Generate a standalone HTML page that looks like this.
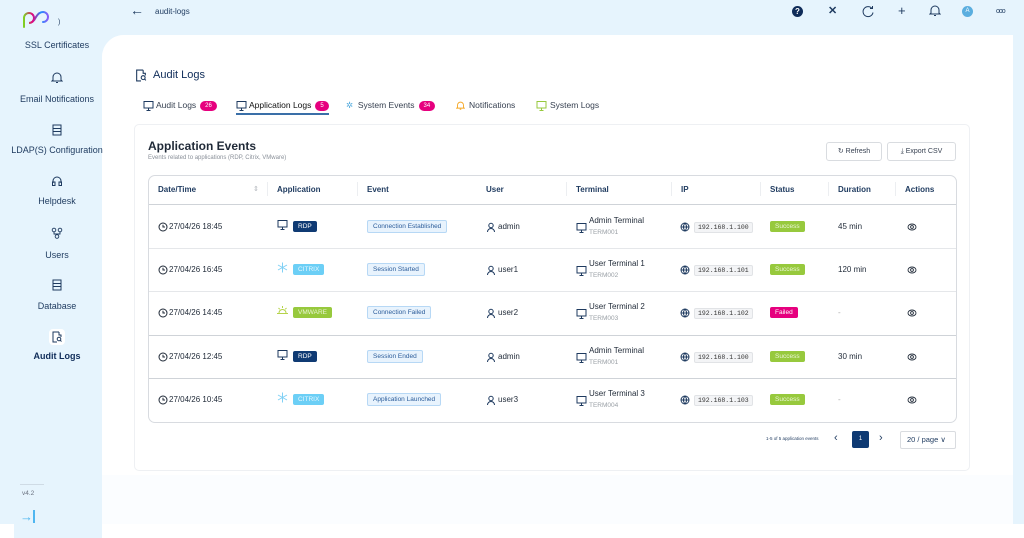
<!DOCTYPE html>
<html><head><meta charset="utf-8"><style>
*{box-sizing:border-box;margin:0;padding:0}
body{width:1024px;height:538px;overflow:hidden;background:#fff;font-family:"Liberation Sans",sans-serif;color:#1f2937;position:relative}
.a{position:absolute}
.bg{left:0;top:0;width:1024px;height:524px;background:#e6f4fd}
.side{left:14px;top:500px;width:88px;height:38px;background:#e6f4fd}
.panel{left:102px;top:35px;width:911px;height:489px;background:#fbfdff;border-top-left-radius:22px}
.panelw{left:102px;top:35px;width:911px;height:440px;background:#fff;border-top-left-radius:22px}
.nav{width:102px;text-align:center;font-size:9px;color:#1e3a5f;left:6px}
.tab{font-size:8.5px;color:#374151;top:100px}
.badge{display:inline-block;background:#e6007e;color:#fff;font-size:6px;border-radius:7px;padding:2px 5px;vertical-align:1px;margin-left:4px}
.card{left:134px;top:124px;width:836px;height:347px;background:#fff;border:1px solid #eef0f3;border-radius:5px}
.tbl{left:148px;top:175px;width:809px;height:248px;border:1px solid #d8dbe0;border-radius:7px;background:#fff}
.th{top:185px;font-size:8px;font-weight:bold;color:#1e3a5f}
.sep{width:1px;height:14px;background:#eceef1;top:182px}
.hl{left:149px;width:807px;height:1px;background:#cfd3d8}
.c{font-size:8px;color:#1f2937}
.tag{font-size:6.5px;padding:2px 5px;border-radius:2px}
.ev{background:#e8f3fd;border:1px solid #b7d8f5;color:#2b5c9a}
.ip{font-family:"Liberation Mono",monospace;font-size:6.5px;background:#f3f4f6;border:1px solid #e1e3e6;padding:1px 3px;border-radius:2px;color:#333}
.ok{background:#97c93d;color:#eaf5d6}
.fail{background:#e6007e;color:#fff}
.sub{font-size:6.5px;color:#9aa0a6}
.btn{top:142px;height:19px;border:1px solid #d9dce0;border-radius:3px;font-size:7px;color:#374151;text-align:center;line-height:17px;background:#fff}
svg.i{position:absolute}
</style></head><body>
<svg width="0" height="0" style="position:absolute"><defs>
<g id="mon" fill="none" stroke="#1e3a5f" stroke-width="1"><rect x="1" y="1.5" width="9" height="6.5"/><path d="M5.5 8v2M3.5 10.5h4"/></g>
<g id="clk" fill="none" stroke="#1f2937" stroke-width="1"><circle cx="5" cy="5" r="4"/><path d="M5 2.8V5h2"/></g>
<g id="usr" fill="none" stroke="#1e3a5f" stroke-width="1"><circle cx="5" cy="3.5" r="2.2"/><path d="M1.5 10a3.5 3.5 0 0 1 7 0"/></g>
<g id="glb" fill="none" stroke="#1e3a5f" stroke-width="1"><circle cx="5" cy="5" r="4"/><path d="M1 5h8M5 1c-2 2.5-2 5.5 0 8M5 1c2 2.5 2 5.5 0 8"/></g>
<g id="eye" fill="none" stroke="#1f2937" stroke-width=".9"><ellipse cx="5" cy="5" rx="4" ry="3"/><circle cx="5" cy="5" r="1.4"/></g>
<g id="snow" fill="none" stroke="#7fd0f5" stroke-width="1"><path d="M5.5 0.5v10M1 3l9 5M1 8l9-5"/></g>
<g id="sun" fill="none" stroke="#b5d34a" stroke-width="1"><path d="M2 8a3.5 3.5 0 0 1 7 0M0 8.5h11M5.5 1v2M1.5 3l1.3 1.3M9.5 3L8.2 4.3"/></g>
</defs></svg>
<div class="a bg"></div>
<div class="a side"></div>
<div class="a panel"></div>
<div class="a panelw"></div>

<!-- logo -->
<svg class="a" style="left:22px;top:9px" width="28" height="20" viewBox="0 0 28 20"><defs><linearGradient id="g" x1="0" x2="1"><stop offset="0" stop-color="#7ed321"/><stop offset=".35" stop-color="#e6007e"/><stop offset=".7" stop-color="#1e90ff"/><stop offset="1" stop-color="#8a5cf6"/></linearGradient></defs><path d="M2 18 V9 a5 5 0 1 1 5 5 q4 0 7-6 q3-5 7-5 a5 5 0 1 1 0 10" fill="none" stroke="url(#g)" stroke-width="2" stroke-linecap="round"/></svg>
<div class="a" style="left:58px;top:19px;font-size:7px;color:#1e3a5f">)</div>
<div class="a nav" style="top:40px">SSL Certificates</div>
<svg class="a" style="left:51px;top:71px" width="12" height="13" viewBox="0 0 12 13"><path d="M2 9V6a4 4 0 0 1 8 0v3l1 1H1z M5 11.5h2" fill="none" stroke="#1e3a5f" stroke-width="1"/></svg>
<div class="a nav" style="top:94px">Email Notifications</div>
<svg class="a" style="left:52px;top:124px" width="10" height="12" viewBox="0 0 10 12"><rect x="1" y="1" width="8" height="10" fill="none" stroke="#1e3a5f"/><path d="M1 4.5h8M1 7.5h8" stroke="#1e3a5f"/></svg>
<div class="a nav" style="top:145px">LDAP(S) Configuration</div>
<svg class="a" style="left:51px;top:175px" width="12" height="12" viewBox="0 0 12 12"><path d="M2 8V6a4 4 0 0 1 8 0v2" fill="none" stroke="#1e3a5f"/><rect x="1.5" y="7" width="2.5" height="3.5" fill="none" stroke="#1e3a5f"/><rect x="8" y="7" width="2.5" height="3.5" fill="none" stroke="#1e3a5f"/></svg>
<div class="a nav" style="top:196px">Helpdesk</div>
<svg class="a" style="left:50px;top:227px" width="14" height="13" viewBox="0 0 14 13"><g fill="none" stroke="#1e3a5f" stroke-width=".9"><circle cx="4" cy="3" r="1.8"/><circle cx="10" cy="3" r="1.8"/><circle cx="7" cy="9.5" r="1.8"/><path d="M4 5v2h6V5M7 7v.7"/></g></svg>
<div class="a nav" style="top:250px">Users</div>
<svg class="a" style="left:52px;top:279px" width="10" height="12" viewBox="0 0 10 12"><rect x="1" y="1" width="8" height="10" fill="none" stroke="#1e3a5f"/><path d="M1 4.5h8M1 7.5h8" stroke="#1e3a5f"/></svg>
<div class="a nav" style="top:301px">Database</div>
<div class="a" style="left:49px;top:329px;width:16px;height:16px;background:#fff;border-radius:4px"></div>
<svg class="a" style="left:52px;top:331px" width="10" height="12" viewBox="0 0 10 12"><path d="M7 1H1v10h4M7 1v3h2v2" fill="none" stroke="#1e3a5f"/><circle cx="7" cy="8" r="1.8" fill="none" stroke="#1e3a5f"/><path d="M8.3 9.3L9.5 10.5" stroke="#1e3a5f"/></svg>
<div class="a nav" style="top:351px;font-weight:bold;color:#0f2c59">Audit Logs</div>
<div class="a" style="left:20px;top:484px;width:24px;height:1px;background:#cfdbe5"></div>
<div class="a" style="left:22px;top:490px;font-size:6.5px;color:#6b7280">v4.2</div>
<div class="a" style="left:20px;top:509px;font-size:13px;color:#4fb6f0">&rarr;</div>
<div class="a" style="left:33px;top:510px;width:1.5px;height:13px;background:#4fb6f0"></div>

<!-- top bar -->
<div class="a" style="left:130px;top:2px;font-size:14px;color:#1e3a5f">&larr;</div>
<div class="a" style="left:155px;top:7px;font-size:8px;color:#1e3a5f">audit-logs</div>
<div class="a" style="left:792px;top:6px;width:11px;height:11px;border-radius:50%;background:#0f2c59;color:#fff;font-size:8px;font-weight:bold;text-align:center;line-height:11px">?</div>
<div class="a" style="left:828px;top:4px;font-size:11px;font-weight:bold;color:#1e3a5f">&#x2715;</div>
<svg class="a" style="left:861px;top:5px" width="14" height="13" viewBox="0 0 14 13"><path d="M11 3.5A5 5 0 1 0 12 7.5" fill="none" stroke="#1e3a5f" stroke-width="1"/><path d="M9 3.5h2.5V1" fill="none" stroke="#1e3a5f"/></svg>
<div class="a" style="left:898px;top:3px;font-size:13px;color:#1e3a5f">+</div>
<svg class="a" style="left:929px;top:4px" width="12" height="13" viewBox="0 0 12 13"><path d="M2 9V6a4 4 0 0 1 8 0v3l1 1H1z M5 11.5h2" fill="none" stroke="#1e3a5f" stroke-width="1"/></svg>
<div class="a" style="left:962px;top:6px;width:11px;height:11px;border-radius:50%;background:#5aaedf;color:#fff;font-size:6px;text-align:center;line-height:11px">A</div>
<div class="a" style="left:996px;top:8px;font-size:7px;color:#1e3a5f;letter-spacing:-1px">ooo</div>

<!-- heading -->
<svg class="a" style="left:135px;top:69px" width="12" height="13" viewBox="0 0 10 12"><path d="M7 1H1v10h4M7 1v3h2v2" fill="none" stroke="#1e3a5f"/><circle cx="7" cy="8" r="1.8" fill="none" stroke="#1e3a5f"/><path d="M8.3 9.3L9.5 10.5" stroke="#1e3a5f"/></svg>
<div class="a" style="left:153px;top:69px;font-size:11px;color:#0f2c59">Audit Logs</div>

<!-- tabs -->
<svg class="i" style="left:143px;top:100px" width="11" height="11" viewBox="0 0 11 11"><use href="#mon"/></svg>
<div class="a tab" style="left:156px">Audit Logs<span class="badge">26</span></div>
<svg class="i" style="left:236px;top:100px" width="11" height="11" viewBox="0 0 11 11"><use href="#mon"/></svg>
<div class="a tab" style="left:249px;color:#111">Application Logs<span class="badge">5</span></div>
<div class="a" style="left:236px;top:113px;width:93px;height:1.5px;background:#3a6fa8"></div>
<div class="a tab" style="left:346px"><span style="color:#5aaedf">✲</span>&nbsp; System Events<span class="badge">34</span></div>
<svg class="i" style="left:456px;top:100px" width="9" height="11" viewBox="0 0 12 13"><path d="M2 9V6a4 4 0 0 1 8 0v3l1 1H1z M5 11.5h2" fill="none" stroke="#f5a623" stroke-width="1.2"/></svg>
<div class="a tab" style="left:469px">Notifications</div>
<svg class="i" style="left:536px;top:100px" width="11" height="11" viewBox="0 0 11 11"><g fill="none" stroke="#97c93d"><rect x="1" y="1.5" width="9" height="6.5"/><path d="M5.5 8v2M3.5 10.5h4"/></g></svg>
<div class="a tab" style="left:550px">System Logs</div>

<div class="a card"></div>
<div class="a" style="left:148px;top:139px;font-size:12px;font-weight:bold;color:#1f2937">Application Events</div>
<div class="a" style="left:148px;top:155px;font-size:6px;color:#8a9099">Events related to applications (RDP, Citrix, VMware)</div>
<div class="a btn" style="left:826px;width:56px">&#x21BB; Refresh</div>
<div class="a btn" style="left:887px;width:69px">&#x2913; Export CSV</div>

<div class="a tbl"></div>
<div class="a th" style="left:158px">Date/Time</div>
<div class="a" style="left:253px;top:185px;font-size:7px;color:#b0b5bb">⇕</div>
<div class="a sep" style="left:267px"></div>
<div class="a th" style="left:277px">Application</div>
<div class="a sep" style="left:357px"></div>
<div class="a th" style="left:367px">Event</div>
<div class="a th" style="left:486px">User</div>
<div class="a sep" style="left:566px"></div>
<div class="a th" style="left:576px">Terminal</div>
<div class="a sep" style="left:671px"></div>
<div class="a th" style="left:681px">IP</div>
<div class="a sep" style="left:760px"></div>
<div class="a th" style="left:770px">Status</div>
<div class="a sep" style="left:828px"></div>
<div class="a th" style="left:838px">Duration</div>
<div class="a sep" style="left:895px"></div>
<div class="a th" style="left:905px">Actions</div>
<div class="a hl" style="top:204px"></div>
<div class="a hl" style="top:248px;background:#e5e7ea"></div>
<div class="a hl" style="top:291px;background:#e5e7ea"></div>
<div class="a hl" style="top:335px"></div>
<div class="a hl" style="top:378px"></div>

<!-- clocks -->
<svg class="i" style="left:158px;top:222px" width="10" height="10"><use href="#clk"/></svg><div class="a c" style="left:169px;top:222px">27/04/26 18:45</div>
<svg class="i" style="left:158px;top:265px" width="10" height="10"><use href="#clk"/></svg><div class="a c" style="left:169px;top:265px">27/04/26 16:45</div>
<svg class="i" style="left:158px;top:308px" width="10" height="10"><use href="#clk"/></svg><div class="a c" style="left:169px;top:308px">27/04/26 14:45</div>
<svg class="i" style="left:158px;top:352px" width="10" height="10"><use href="#clk"/></svg><div class="a c" style="left:169px;top:352px">27/04/26 12:45</div>
<svg class="i" style="left:158px;top:395px" width="10" height="10"><use href="#clk"/></svg><div class="a c" style="left:169px;top:395px">27/04/26 10:45</div>

<svg class="i" style="left:277px;top:219px" width="11" height="11"><use href="#mon"/></svg><div class="a tag" style="left:293px;top:221px;background:#0f3a73;color:#fff">RDP</div>
<svg class="i" style="left:277px;top:262px" width="11" height="11"><use href="#snow"/></svg><div class="a tag" style="left:293px;top:264px;background:#6ccff6;color:#e6f7fe">CITRIX</div>
<svg class="i" style="left:277px;top:305px" width="11" height="11"><use href="#sun"/></svg><div class="a tag" style="left:293px;top:307px;background:#97c93d;color:#eaf5d6">VMWARE</div>
<svg class="i" style="left:277px;top:349px" width="11" height="11"><use href="#mon"/></svg><div class="a tag" style="left:293px;top:351px;background:#0f3a73;color:#fff">RDP</div>
<svg class="i" style="left:277px;top:392px" width="11" height="11"><use href="#snow"/></svg><div class="a tag" style="left:293px;top:394px;background:#6ccff6;color:#e6f7fe">CITRIX</div>

<div class="a tag ev" style="left:367px;top:220px">Connection Established</div>
<div class="a tag ev" style="left:367px;top:263px">Session Started</div>
<div class="a tag ev" style="left:367px;top:306px">Connection Failed</div>
<div class="a tag ev" style="left:367px;top:350px">Session Ended</div>
<div class="a tag ev" style="left:367px;top:393px">Application Launched</div>

<svg class="i" style="left:486px;top:222px" width="10" height="10"><use href="#usr"/></svg><div class="a c" style="left:498px;top:222px">admin</div>
<svg class="i" style="left:486px;top:265px" width="10" height="10"><use href="#usr"/></svg><div class="a c" style="left:498px;top:265px">user1</div>
<svg class="i" style="left:486px;top:308px" width="10" height="10"><use href="#usr"/></svg><div class="a c" style="left:498px;top:308px">user2</div>
<svg class="i" style="left:486px;top:352px" width="10" height="10"><use href="#usr"/></svg><div class="a c" style="left:498px;top:352px">admin</div>
<svg class="i" style="left:486px;top:395px" width="10" height="10"><use href="#usr"/></svg><div class="a c" style="left:498px;top:395px">user3</div>

<svg class="i" style="left:576px;top:222px" width="11" height="11"><use href="#mon"/></svg><div class="a c" style="left:589px;top:216px">Admin Terminal</div><div class="a sub" style="left:589px;top:229px">TERM001</div>
<svg class="i" style="left:576px;top:265px" width="11" height="11"><use href="#mon"/></svg><div class="a c" style="left:589px;top:259px">User Terminal 1</div><div class="a sub" style="left:589px;top:272px">TERM002</div>
<svg class="i" style="left:576px;top:308px" width="11" height="11"><use href="#mon"/></svg><div class="a c" style="left:589px;top:302px">User Terminal 2</div><div class="a sub" style="left:589px;top:315px">TERM003</div>
<svg class="i" style="left:576px;top:352px" width="11" height="11"><use href="#mon"/></svg><div class="a c" style="left:589px;top:346px">Admin Terminal</div><div class="a sub" style="left:589px;top:359px">TERM001</div>
<svg class="i" style="left:576px;top:395px" width="11" height="11"><use href="#mon"/></svg><div class="a c" style="left:589px;top:389px">User Terminal 3</div><div class="a sub" style="left:589px;top:402px">TERM004</div>

<svg class="i" style="left:680px;top:222px" width="10" height="10"><use href="#glb"/></svg><div class="a ip" style="left:694px;top:222px">192.168.1.100</div>
<svg class="i" style="left:680px;top:265px" width="10" height="10"><use href="#glb"/></svg><div class="a ip" style="left:694px;top:265px">192.168.1.101</div>
<svg class="i" style="left:680px;top:308px" width="10" height="10"><use href="#glb"/></svg><div class="a ip" style="left:694px;top:308px">192.168.1.102</div>
<svg class="i" style="left:680px;top:352px" width="10" height="10"><use href="#glb"/></svg><div class="a ip" style="left:694px;top:352px">192.168.1.100</div>
<svg class="i" style="left:680px;top:395px" width="10" height="10"><use href="#glb"/></svg><div class="a ip" style="left:694px;top:395px">192.168.1.103</div>

<div class="a tag ok" style="left:770px;top:221px">Success</div>
<div class="a tag ok" style="left:770px;top:264px">Success</div>
<div class="a tag fail" style="left:770px;top:307px">Failed</div>
<div class="a tag ok" style="left:770px;top:351px">Success</div>
<div class="a tag ok" style="left:770px;top:394px">Success</div>

<div class="a c" style="left:838px;top:222px">45 min</div>
<div class="a c" style="left:838px;top:265px">120 min</div>
<div class="a c" style="left:838px;top:308px;color:#aaa">-</div>
<div class="a c" style="left:838px;top:352px">30 min</div>
<div class="a c" style="left:838px;top:395px;color:#aaa">-</div>

<svg class="i" style="left:907px;top:222px" width="10" height="10"><use href="#eye"/></svg>
<svg class="i" style="left:907px;top:265px" width="10" height="10"><use href="#eye"/></svg>
<svg class="i" style="left:907px;top:308px" width="10" height="10"><use href="#eye"/></svg>
<svg class="i" style="left:907px;top:352px" width="10" height="10"><use href="#eye"/></svg>
<svg class="i" style="left:907px;top:395px" width="10" height="10"><use href="#eye"/></svg>

<!-- pagination -->
<div class="a" style="left:766px;top:436px;font-size:4.5px;color:#1e3a5f">1-5 of 5 application events</div>
<div class="a" style="left:834px;top:432px;font-size:11px;color:#1e3a5f">&lsaquo;</div>
<div class="a" style="left:852px;top:431px;width:17px;height:17px;background:#0f3a73;border-radius:2px;color:#fff;font-size:6px;text-align:center;line-height:17px">1</div>
<div class="a" style="left:879px;top:432px;font-size:11px;color:#1e3a5f">&rsaquo;</div>
<div class="a" style="left:900px;top:431px;width:56px;height:18px;border:1px solid #d9dce0;border-radius:2px;font-size:7.5px;color:#1e3a5f;line-height:16px;padding-left:6px;background:#fff">20 / page &#x2228;</div>
</body></html>
